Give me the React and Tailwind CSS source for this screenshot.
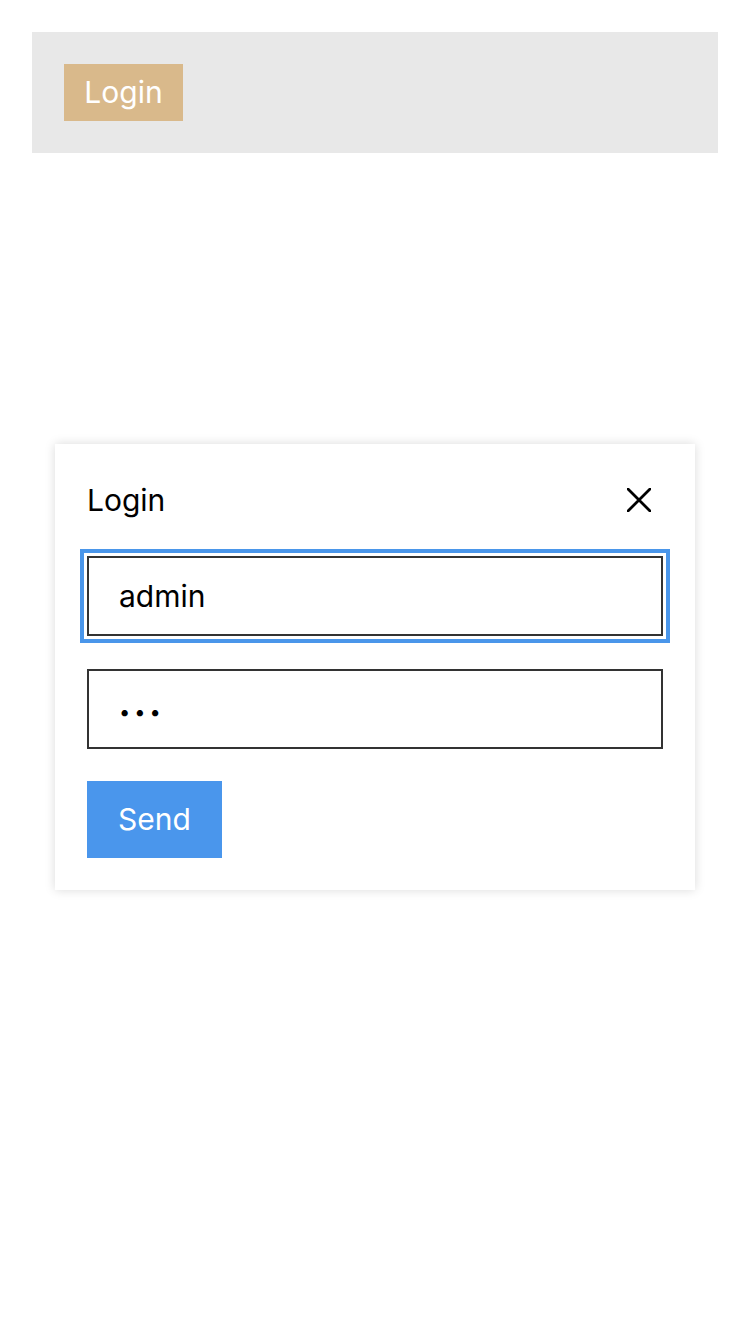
export default function App() {
  const font = { fontFamily: 'Inter, "Noto Sans", sans-serif' };
  return (
    <div className="relative h-[1334px] w-[750px] bg-white" style={font}>
      <div className="p-8">
        <div className="bg-[#e8e8e8] p-8">
          <button className="flex h-[57px] w-[119px] items-center justify-center bg-[#d9b98b] text-[30px] text-white">
            Login
          </button>
        </div>
      </div>
      <div className="absolute inset-0 flex items-center justify-center">
        <div className="w-[640px] bg-white p-8 shadow-[0_0_10px_rgba(0,0,0,0.15)]">
          <div className="flex h-12 items-center justify-between">
            <span className="text-[30px] text-black">Login</span>
            <svg width="24" height="24" viewBox="0 0 24 24" className="mr-3">
              <path d="M1 1L23 23M23 1L1 23" stroke="#000" strokeWidth="2.8" strokeLinecap="round" />
            </svg>
          </div>
          <div className="mt-8 flex flex-col gap-[33px]">
            <input
              readOnly
              value="admin"
              className="h-20 w-full border-2 border-[#333] px-[30px] text-[30px] text-black outline-4 outline-offset-3 outline-[#4a96ea]"
              style={font}
            />
            <input
              readOnly
              type="password"
              value="abc"
              className="h-20 w-full border-2 border-[#333] px-[30px] pt-[6px] text-[20px] tracking-[4px] text-black outline-none"
              style={font}
            />
          </div>
          <button className="mt-8 flex h-[77px] w-[135px] items-center justify-center bg-[#4a96ec] text-[30px] text-white">
            Send
          </button>
        </div>
      </div>
    </div>
  );
}
